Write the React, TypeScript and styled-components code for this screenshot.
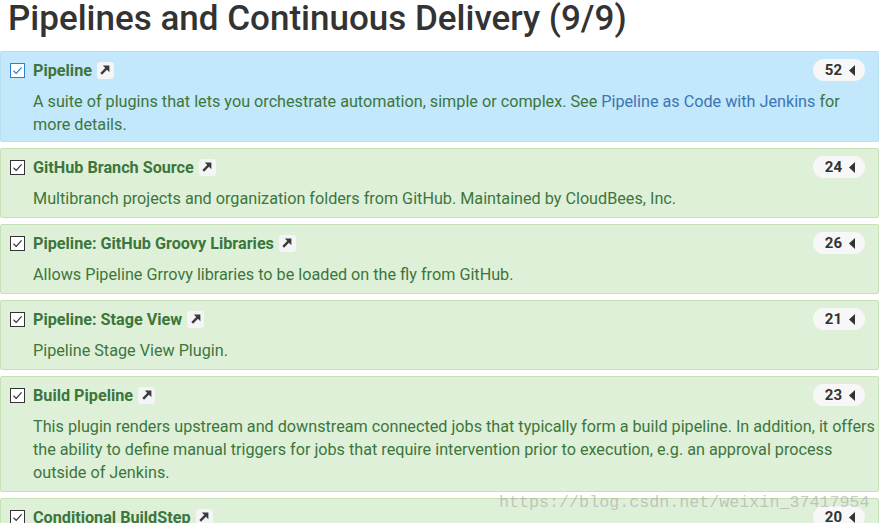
import React from "react";
import styled, { createGlobalStyle } from "styled-components";

const Global = createGlobalStyle`
  html, body { margin: 0; padding: 0; background: #fff; }
  body { font-family: Roboto, "Liberation Sans", sans-serif; overflow: hidden; }
`;

const Page = styled.div`
  position: relative;
  width: 880px;
  height: 523px;
  overflow: hidden;
`;

const Heading = styled.h1`
  margin: 0;
  padding: 0 0 0 8px;
  height: 51px;
  font-size: 35px;
  line-height: 38px;
  font-weight: 500;
  color: #333;
  white-space: nowrap;
`;

const List = styled.div`
  display: flex;
  flex-direction: column;
  gap: 6px;
  width: 879px;
`;

const Card = styled.div<{ $active?: boolean }>`
  background: ${(p) => (p.$active ? "#c3e7fb" : "#dff0d8")};
  border: 1px solid ${(p) => (p.$active ? "#b7e1ee" : "#c6e2b5")};
  border-top-color: #c6e2b5;
  border-radius: 2px;
  padding: 7px 1px ${(p) => (p.$active ? "5px" : "7px")} 9px;
  color: #3c763d;
`;

const TitleRow = styled.div`
  display: flex;
  align-items: center;
  height: 22px;
`;

const Check = styled.span<{ $active?: boolean }>`
  width: 13px;
  height: 13px;
  border: 1px solid ${(p) => (p.$active ? "#2d7fd3" : "#333")};
  background: #fff;
  display: inline-flex;
  align-items: center;
  justify-content: center;
  margin-right: 8px;
  flex: none;
`;

const Title = styled.span`
  font-size: 16.2px;
  font-weight: 700;
  color: #3c763d;
  white-space: nowrap;
`;

const LinkIcon = styled.span`
  display: inline-flex;
  align-items: center;
  justify-content: center;
  width: 17px;
  height: 17px;
  margin-left: 5px;
  border-radius: 3px;
  background: #f3f5f6;
`;

const Badge = styled.span`
  margin-left: auto;
  margin-right: 12px;
  display: inline-flex;
  align-items: center;
  gap: 7px;
  height: 22px;
  padding: 0 10px 0 12px;
  border-radius: 11px;
  background: #f7f7f7;
  font-size: 15px;
  font-weight: 700;
  color: #333;
`;

const Desc = styled.div`
  margin: 9px 0 0 23px;
  font-size: 16.2px;
  line-height: 23px;
  color: #3c763d;
`;

const A = styled.a`
  color: #3a76b3;
  text-decoration: none;
`;

const Watermark = styled.div`
  position: absolute;
  left: 499px;
  top: 492px;
  font-family: "Liberation Mono", "DejaVu Sans Mono", monospace;
  font-size: 16.7px;
  line-height: 22px;
  color: rgba(160, 160, 160, 0.55);
  pointer-events: none;
  white-space: nowrap;
`;

const CheckMark = ({ active }: { active?: boolean }) => (
  <svg width="11" height="11" viewBox="0 0 11 11">
    <path d="M1.5 5.8 L4.2 8.4 L9.6 2.4" fill="none" stroke={active ? "#2d7fd3" : "#333"} strokeWidth="1.2" />
  </svg>
);

const Arrow = () => (
  <svg width="12" height="12" viewBox="0 0 12 12">
    <path d="M2.2 9.8 L8.3 3.7" stroke="#3a3a3a" strokeWidth="2.4" strokeLinecap="butt" />
    <path d="M3.8 1.6 L10.4 1.6 L10.4 8.2 Z" fill="#3a3a3a" />
  </svg>
);

const Caret = () => (
  <svg width="6" height="11" viewBox="0 0 6 11">
    <path d="M6 0 L6 11 L0 5.5 Z" fill="#333" />
  </svg>
);

type Plugin = { name: string; count: number; desc: React.ReactNode; active?: boolean };

const plugins: Plugin[] = [
  {
    name: "Pipeline",
    count: 52,
    active: true,
    desc: (
      <>
        A suite of plugins that lets you orchestrate automation, simple or complex. See{" "}
        <A href="#">Pipeline as Code with Jenkins</A> for more details.
      </>
    ),
  },
  {
    name: "GitHub Branch Source",
    count: 24,
    desc: "Multibranch projects and organization folders from GitHub. Maintained by CloudBees, Inc.",
  },
  {
    name: "Pipeline: GitHub Groovy Libraries",
    count: 26,
    desc: "Allows Pipeline Grrovy libraries to be loaded on the fly from GitHub.",
  },
  { name: "Pipeline: Stage View", count: 21, desc: "Pipeline Stage View Plugin." },
  {
    name: "Build Pipeline",
    count: 23,
    desc:
      "This plugin renders upstream and downstream connected jobs that typically form a build pipeline. In addition, it offers the ability to define manual triggers for jobs that require intervention prior to execution, e.g. an approval process outside of Jenkins.",
  },
  { name: "Conditional BuildStep", count: 20, desc: "A buildstep wrapping any number of other buildsteps." },
];

export default function App() {
  return (
    <Page>
      <Global />
      <Heading>Pipelines and Continuous Delivery (9/9)</Heading>
      <List>
        {plugins.map((p) => (
          <Card key={p.name} $active={p.active}>
            <TitleRow>
              <Check $active={p.active}>
                <CheckMark active={p.active} />
              </Check>
              <Title>{p.name}</Title>
              <LinkIcon>
                <Arrow />
              </LinkIcon>
              <Badge>
                {p.count}
                <Caret />
              </Badge>
            </TitleRow>
            <Desc>{p.desc}</Desc>
          </Card>
        ))}
      </List>
      <Watermark>https://blog.csdn.net/weixin_37417954</Watermark>
    </Page>
  );
}
